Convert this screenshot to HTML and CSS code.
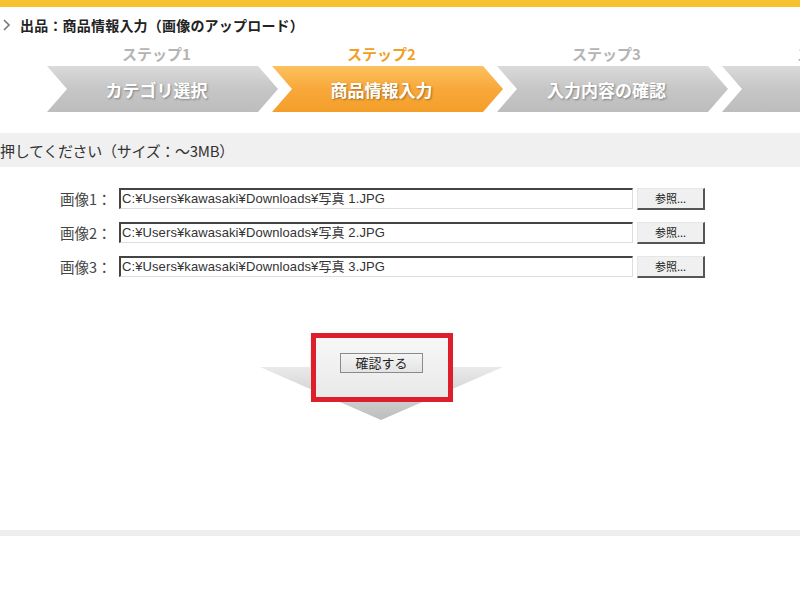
FILE: index.html
```html
<!DOCTYPE html>
<html lang="ja">
<head>
<meta charset="utf-8">
<link rel="stylesheet" href="styles.css">
</head>
<body>
<div class="topbar"></div>
<div class="title">
  <svg class="chev" width="10" height="12" viewBox="0 0 10 12"><polyline points="2,1 7,6 2,11" fill="none" stroke="#777" stroke-width="1.6"/></svg>
  <span>出品：商品情報入力（画像のアップロード）</span>
</div>
<div class="steps">
  <div class="step">
    <div class="step-label">ステップ1</div>
    <div class="arrow gray"><span>カテゴリ選択</span></div>
  </div>
  <div class="step">
    <div class="step-label active">ステップ2</div>
    <div class="arrow orange"><span>商品情報入力</span></div>
  </div>
  <div class="step">
    <div class="step-label">ステップ3</div>
    <div class="arrow gray"><span>入力内容の確認</span></div>
  </div>
  <div class="step">
    <div class="step-label">ステップ4</div>
    <div class="arrow gray"></div>
  </div>
</div>
<div class="band"><span>押してください（サイズ：～3MB）</span></div>
<div class="files">
  <div class="row">
    <label class="lbl">画像1：</label>
    <div class="field">C:¥Users¥kawasaki¥Downloads¥写真 1.JPG</div>
    <button class="browse">参照...</button>
  </div>
  <div class="row">
    <label class="lbl">画像2：</label>
    <div class="field">C:¥Users¥kawasaki¥Downloads¥写真 2.JPG</div>
    <button class="browse">参照...</button>
  </div>
  <div class="row">
    <label class="lbl">画像3：</label>
    <div class="field">C:¥Users¥kawasaki¥Downloads¥写真 3.JPG</div>
    <button class="browse">参照...</button>
  </div>
</div>
<div class="confirm">
  <svg class="bigarrow" width="243" height="88" viewBox="0 0 243 88">
    <defs>
      <linearGradient id="ag" x1="0" y1="0" x2="0" y2="1">
        <stop offset="0" stop-color="#fbfbfb"/>
        <stop offset="0.45" stop-color="#e6e6e6"/>
        <stop offset="1" stop-color="#bdbdbd"/>
      </linearGradient>
    </defs>
    <polygon points="50,0 192,0 192,34 243,34 121,87 0,34 50,34" fill="url(#ag)"/>
  </svg>
  <div class="redbox">
    <button class="ok">確認する</button>
  </div>
</div>
<div class="footline"></div>
</body>
</html>
```
FILE: styles.css
```css
* { box-sizing: border-box; }
html, body { margin: 0; padding: 0; background: #fff; }
body {
  width: 800px;
  height: 600px;
  overflow: hidden;
  font-family: "Noto Sans CJK JP", "Liberation Sans", sans-serif;
  color: #333;
}
.topbar { height: 7px; background: #f7c230; }
.title {
  display: flex;
  align-items: center;
  gap: 8px;
  height: 26px;
  margin-top: 5px;
  padding-left: 2px;
  font-size: 14px;
  font-weight: bold;
  color: #222;
  letter-spacing: 0.2px;
}
.chev { flex-shrink: 0; }
.steps {
  display: flex;
  padding-left: 47px;
  margin-top: 4px;
  overflow: hidden;
  width: 800px;
}
.step { flex: 0 0 231px; margin-right: -6px; display: flex; flex-direction: column; }
.step-label {
  height: 24px;
  line-height: 24px;
  padding-right: 12px;
  text-align: center;
  font-size: 15px;
  font-weight: bold;
  color: #b4b4b4;
  white-space: nowrap;
}
.step-label.active { color: #f0a024; }
.arrow {
  height: 46px;
  display: flex;
  align-items: center;
  justify-content: center;
  padding-right: 12px;
  clip-path: polygon(0 0, 211px 0, 231px 23px, 211px 46px, 0 46px, 20px 23px);
  font-size: 17px;
  font-weight: bold;
  color: #fff;
  text-shadow: 1px 1px 2px rgba(0,0,0,0.35);
}
.arrow.gray { background: linear-gradient(#dadada, #c6c6c6 50%, #bdbdbd); }
.arrow.orange { background: linear-gradient(#fcc160, #f8a83a 50%, #f49f2a); }
.band {
  margin-top: 21px;
  height: 34px;
  background: #f0f0f0;
  display: flex;
  align-items: center;
  font-size: 15px;
  color: #333;
  letter-spacing: -0.3px;
}
.files {
  display: flex;
  flex-direction: column;
  gap: 13px;
  padding-top: 21px;
  padding-left: 60px;
}
.row { display: flex; align-items: center; height: 21px; }
.lbl {
  width: 57px;
  font-size: 14.5px;
  color: #444;
  white-space: nowrap;
}
.field {
  width: 514px;
  height: 21px;
  margin-left: 2px;
  border-top: 2px solid #444;
  border-left: 2px solid #444;
  border-right: 1px solid #ddd;
  border-bottom: 1px solid #ddd;
  background: #fff;
  font-family: "Liberation Sans", "Noto Sans CJK JP", sans-serif;
  font-size: 13px;
  line-height: 17px;
  padding-left: 1px;
  color: #333;
  letter-spacing: 0.1px;
  white-space: nowrap;
  overflow: hidden;
}
.browse {
  width: 68px;
  height: 22px;
  margin-left: 4px;
  padding: 0;
  background: #f0f0f0;
  border: 1px solid #e6e6e6;
  border-right: 2px solid #555;
  border-bottom: 2px solid #555;
  font-family: "Noto Sans CJK JP", sans-serif;
  font-size: 11px;
  color: #222;
}
.confirm {
  position: relative;
  width: 243px;
  height: 88px;
  margin-top: 56px;
  margin-left: 260px;
  display: flex;
  justify-content: center;
}
.bigarrow { position: absolute; left: 0; top: 0; }
.redbox {
  position: relative;
  width: 142px;
  height: 69px;
  border: 5px solid #dc1f2b;
  background: linear-gradient(#f7f7f7, #e9e9e9);
  display: flex;
  justify-content: center;
  padding-top: 15px;
}
.ok {
  width: 83px;
  height: 20px;
  padding: 0;
  background: linear-gradient(#f4f4f4, #e4e4e4);
  border: 1px solid #8a8a8a;
  font-family: "Noto Sans CJK JP", sans-serif;
  font-size: 13px;
  line-height: 16px;
  color: #222;
}
.footline {
  margin-top: 109px;
  height: 6px;
  background: #eeeeee;
}
```
